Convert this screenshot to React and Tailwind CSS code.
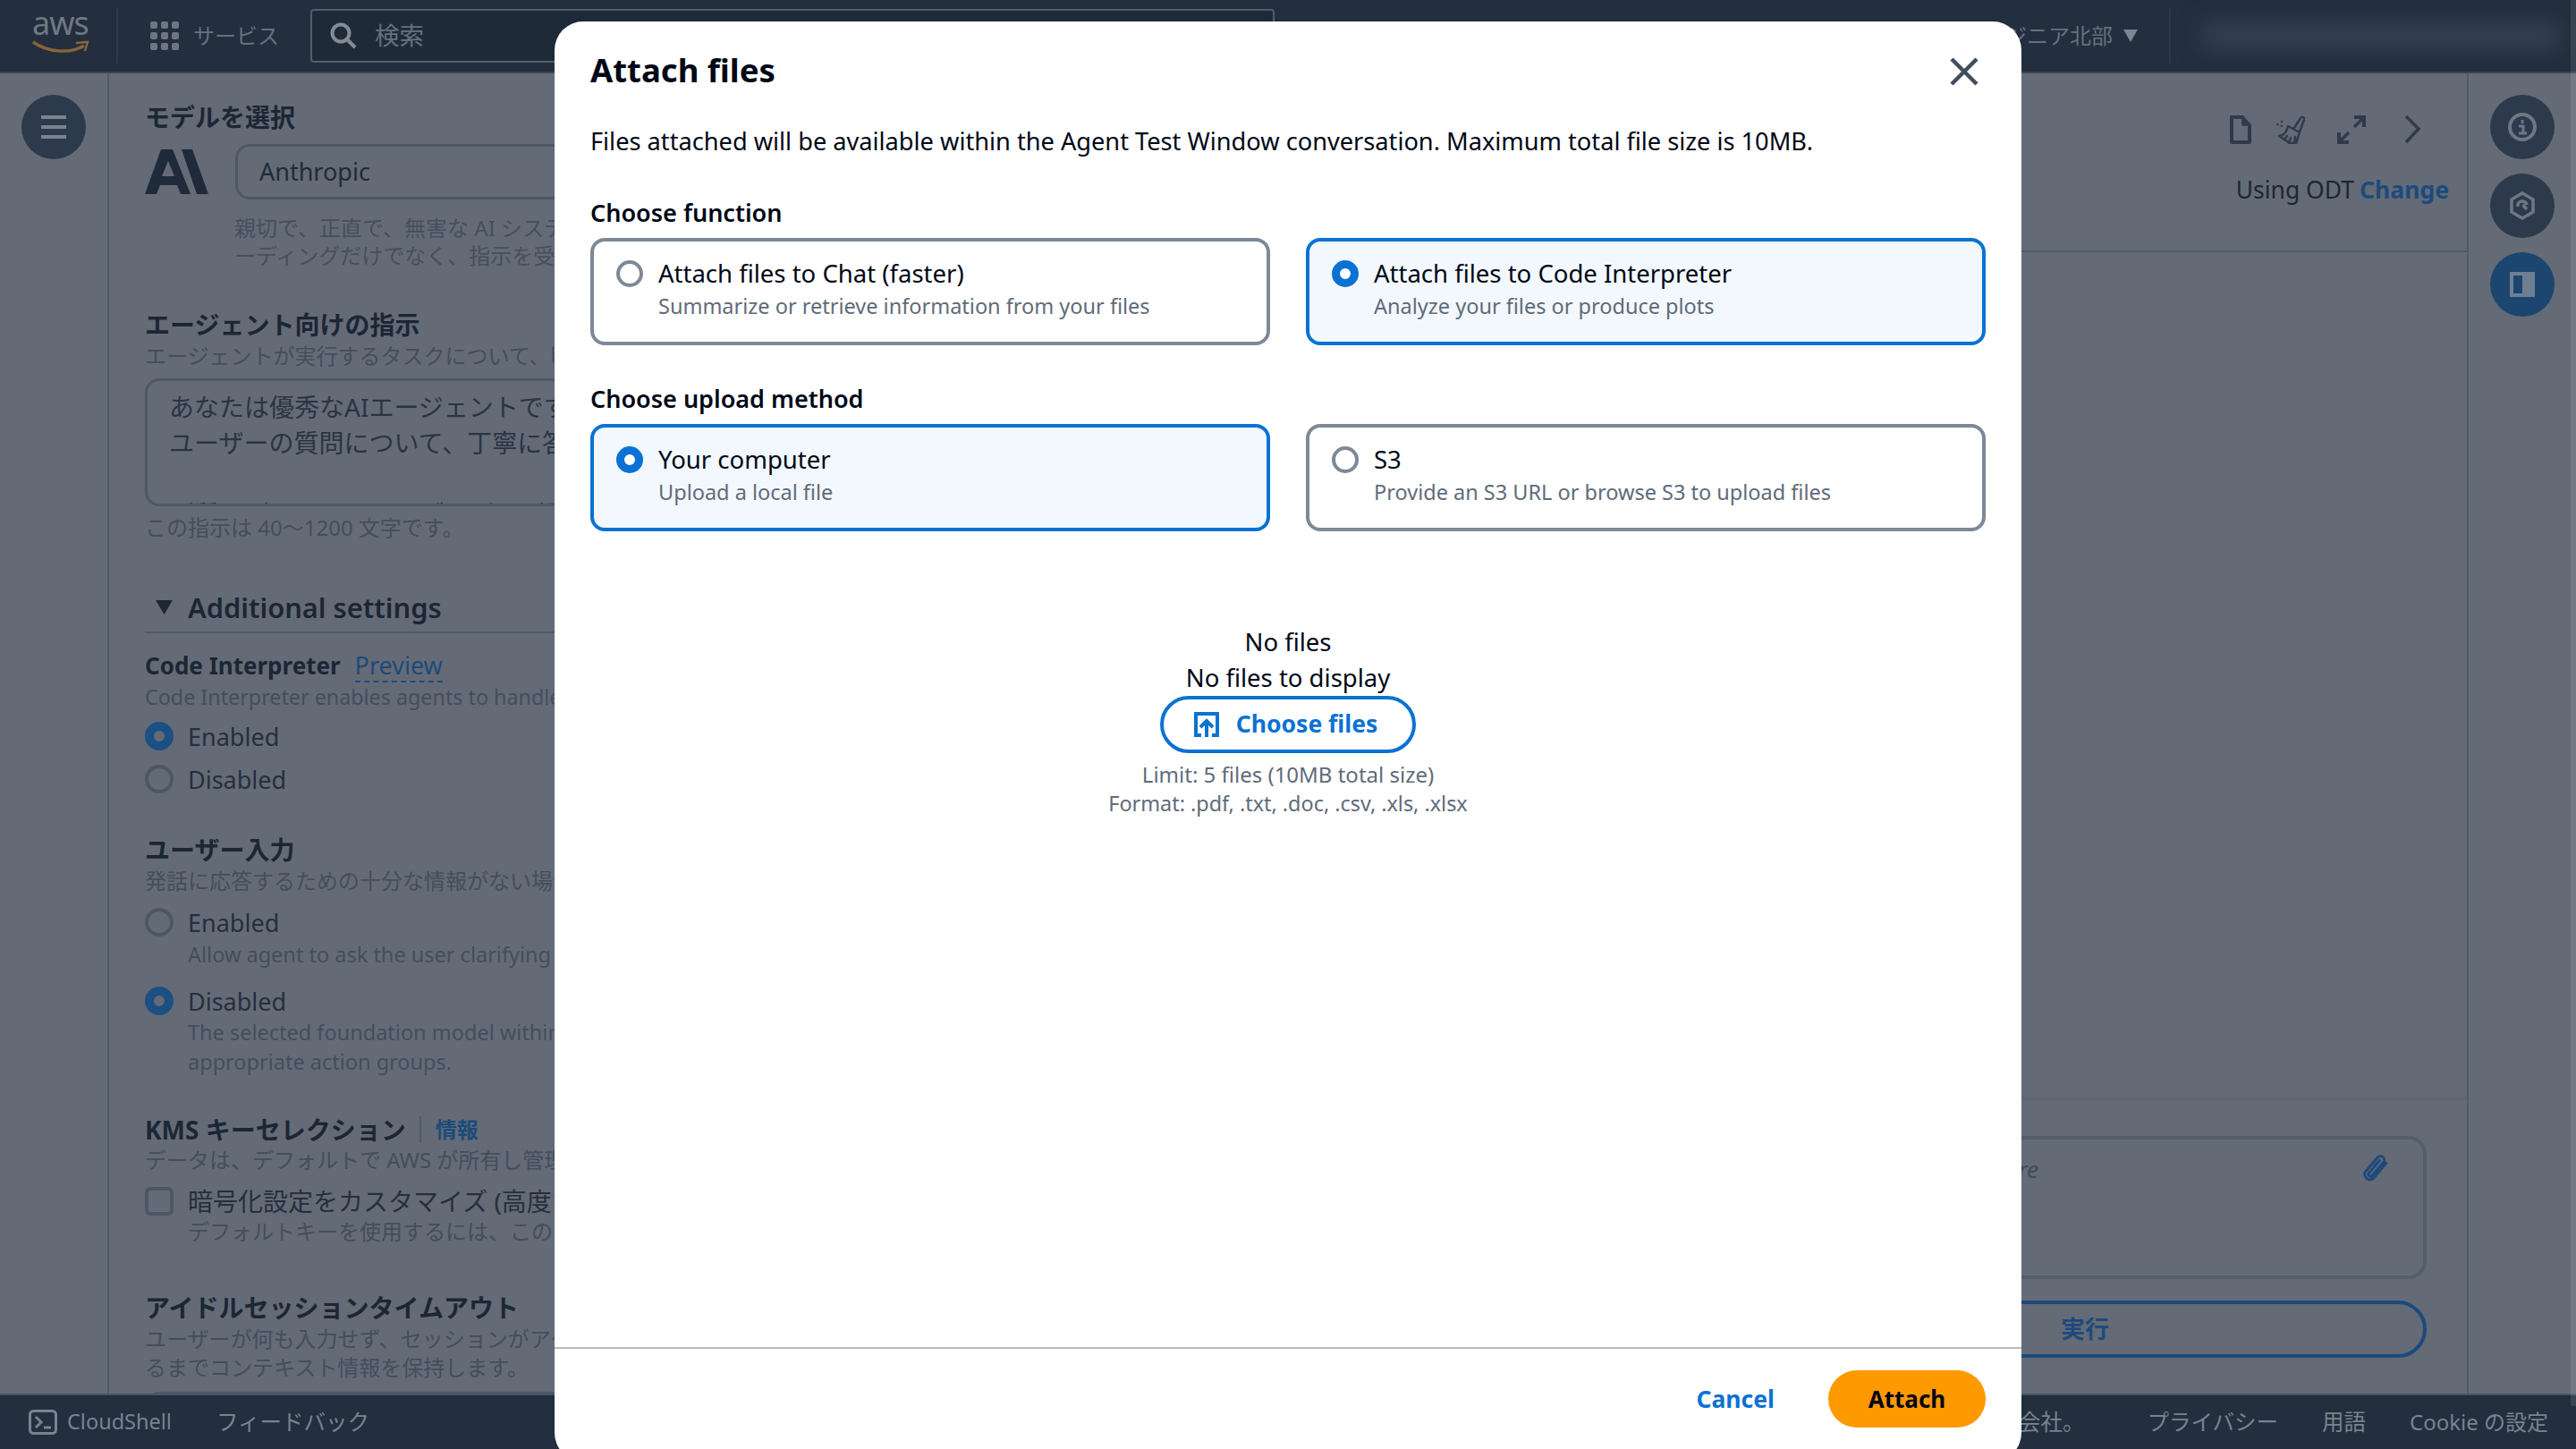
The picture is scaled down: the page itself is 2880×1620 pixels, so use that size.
const Label = ({ children, cls = "", size = "text-[28px]" }) => (
  <div className={`h-[34px] leading-[34px] font-bold text-[#1c2635] whitespace-nowrap ${size} ${cls}`}>{children}</div>
);
const Sub = ({ children, cls = "", size = "text-[24px]" }) => (
  <div className={`h-[32px] leading-[32px] text-[#434e5d] whitespace-nowrap ${size} ${cls}`}>{children}</div>
);
const DimRadio = ({ on }) =>
  on ? (
    <span className="w-[32px] h-[32px] rounded-full border-[10px] border-[#1c4f82] shrink-0" />
  ) : (
    <span className="w-[32px] h-[32px] rounded-full border-[4px] border-[#4b5666] shrink-0" />
  );
const DimOption = ({ on, children, cls = "" }) => (
  <div className={`flex items-center gap-[16px] h-[32px] text-[27px] text-[#252f3e] whitespace-nowrap ${cls}`}>
    <DimRadio on={on} />
    <span className="pt-[2px]">{children}</span>
  </div>
);
const Circle = ({ children, active }) => (
  <div className={`w-[72px] h-[72px] rounded-full flex items-center justify-center ${active ? "bg-[#1c456f]" : "bg-[#2c3a4c]"}`}>
    {children}
  </div>
);
const Card = ({ on, title, sub }) => (
  <div className={`w-[760px] h-[120px] border-[4px] rounded-[16px] pl-[25px] pt-[18px] flex items-start gap-[17px] ${on ? "border-[#0972d3] bg-[#f2f8fd]" : "border-[#7d8998] bg-white"}`}>
    {on ? (
      <span className="mt-[3px] w-[30px] h-[30px] rounded-full border-[9px] border-[#0972d3] bg-white shrink-0" />
    ) : (
      <span className="mt-[3px] w-[30px] h-[30px] rounded-full border-[4px] border-[#7d8998] bg-white shrink-0" />
    )}
    <div>
      <div className="h-[36px] leading-[36px] text-[27.5px] text-[#000716]">{title}</div>
      <div className="h-[36px] leading-[36px] text-[23.5px] text-[#5f6b7a]">{sub}</div>
    </div>
  </div>
);

export default function App() {
  return (
    <div className="relative w-[2880px] h-[1620px] overflow-hidden flex flex-col bg-[#646b76] [font-family:'Noto_Sans','Noto_Sans_CJK_JP',sans-serif]">
      {/* top nav */}
      <header className="h-[82px] shrink-0 bg-[#232e3e] border-b-2 border-[#3a4553] flex items-center relative">
        <div className="w-[132px] h-[62px] border-r-2 border-[#2e3a49] pl-[36px] flex flex-col shrink-0">
          <div className="h-[40px] leading-[34px] text-[36px] text-[#717884] tracking-[-1px]">aws</div>
          <svg width="64" height="16" viewBox="0 0 64 16" className="-mt-[4px]">
            <path d="M1 2 C16 13 42 16 58 6" fill="none" stroke="#846639" strokeWidth="3.500" />
            <path d="M49 3 L62 2 L59 12" fill="none" stroke="#846639" strokeWidth="2.500" />
          </svg>
        </div>
        <div className="ml-[36px] grid grid-cols-3 gap-[4px] w-[32px] shrink-0">
          {[0, 1, 2, 3, 4, 5, 6, 7, 8].map((i) => (
            <span key={i} className="w-[8px] h-[8px] rounded-[2px] bg-[#6f7682]" />
          ))}
        </div>
        <span className="ml-[16px] text-[24px] text-[#67717d] whitespace-nowrap">サービス</span>
        <div className="ml-[35px] w-[1078px] h-[60px] border-2 border-[#535e6c] rounded-[4px] bg-[#1f2a39] flex items-center pl-[20px] shrink-0">
          <svg width="30" height="30" viewBox="0 0 30 30" fill="none" stroke="#858b93" strokeWidth="4">
            <circle cx="12" cy="12" r="9.500" />
            <path d="M19 19 L28 28" />
          </svg>
          <span className="ml-[20px] text-[27.5px] text-[#67717d]">検索</span>
        </div>
        <div className="ml-auto flex items-center shrink-0 pr-[20px]">
          <span className="text-[24px] text-[#67717d] whitespace-nowrap">バージニア北部</span>
          <svg width="16" height="14" viewBox="0 0 16 14" className="ml-[12px]"><path d="M0 0 H16 L8 14 Z" fill="#7f858e" /></svg>
          <span className="ml-[35px] w-[2px] h-[62px] bg-[#2e3a49]" />
          <span className="ml-[36px] w-[397px] h-[30px] bg-[#354150] blur-[12px]" />
        </div>
      </header>

      {/* body */}
      <main className="flex-1 min-h-0 flex overflow-hidden">
        <div className="w-[122px] shrink-0 border-r-2 border-[#505b6a] pt-[24px] pl-[24px]">
          <div className="w-[72px] h-[72px] rounded-full bg-[#2c3a4c] flex flex-col items-center justify-center gap-[7px]">
            <span className="w-[28px] h-[4px] bg-[#7c838d]" />
            <span className="w-[28px] h-[4px] bg-[#7c838d]" />
            <span className="w-[28px] h-[4px] bg-[#7c838d]" />
          </div>
        </div>

        {/* builder column */}
        <section className="w-[900px] shrink-0 pl-[40px] overflow-hidden">
          <div className="mt-[31px] h-[36px] leading-[36px] text-[28px] font-bold text-[#1c2635]">モデルを選択</div>
          <div className="mt-[12px] flex items-center">
            <svg width="71" height="50" viewBox="0 0 71 50" className="shrink-0" fill="#1f2a3a">
              <path d="M18 0 H31 L51 50 H40 L36 40 H17 L13 50 H0 Z M19 30 H33 L26 13 Z" fillRule="evenodd" />
              <path d="M41 0 H53 L71 50 H58 Z" />
            </svg>
            <div className="ml-[30px] w-[760px] h-[62px] border-[3px] border-[#4d5867] rounded-[16px] flex items-center pl-[24px] text-[27px] text-[#1f2a3a]">Anthropic</div>
          </div>
          <div className="mt-[16px] ml-[100px] leading-[31px] text-[24px] text-[#454f5e] whitespace-nowrap">
            <div>親切で、正直で、無害な AI システムの構築を目指しています。</div>
            <div>ーディングだけでなく、指示を受けて作業します。</div>
          </div>
          <div className="mt-[44px] h-[36px] leading-[36px] text-[28px] font-bold text-[#1c2635]">エージェント向けの指示</div>
          <Sub cls="mt-[1px]">エージェントが実行するタスクについて、明確で具体的な指示を入力します。</Sub>
          <div className="mt-[9px] h-[143px] w-[860px] border-[3px] border-[#4d5867] rounded-[16px] pl-[24px] pt-[9px] text-[28px] leading-[40px] text-[#2a3443] overflow-hidden whitespace-nowrap">
            <div>あなたは優秀なAIエージェントです。</div>
            <div>ユーザーの質問について、丁寧に答えてください。</div>
            <div>&nbsp;</div>
            <div>ご質問がありましたらブログをご覧ください。</div>
          </div>
          <Sub cls="mt-[8px]">この指示は 40～1200 文字です。</Sub>

          <div className="mt-[53px] h-[49px] w-[860px] border-b-2 border-[#4f5a69] flex items-start">
            <svg width="19" height="16" viewBox="0 0 19 16" className="ml-[12px] mt-[12px] shrink-0"><path d="M0 0 H19 L9.500 16 Z" fill="#1c2635" /></svg>
            <span className="ml-[17px] h-[40px] leading-[40px] text-[30.800px] font-semibold text-[#1c2635]">Additional settings</span>
          </div>

          <Label size="text-[26px]" cls="mt-[19px] flex items-start">
            <span>Code Interpreter</span>
            <span className="ml-[16px] text-[27px] font-normal text-[#1c4a7c] border-b-2 border-dashed border-[#1c4a7c]">Preview</span>
          </Label>
          <Sub size="text-[23.300px]" cls="mt-[2px]">Code Interpreter enables agents to handle tasks that involve</Sub>
          <DimOption on cls="mt-[12px]">Enabled</DimOption>
          <DimOption cls="mt-[16px]">Disabled</DimOption>

          <Label cls="mt-[46px]">ユーザー入力</Label>
          <Sub cls="mt-[2px]">発話に応答するための十分な情報がない場合にユーザーに確認します。</Sub>
          <DimOption cls="mt-[14px]">Enabled</DimOption>
          <Sub size="text-[23.500px]" cls="mt-[4px] ml-[48px]">Allow agent to ask the user clarifying questions</Sub>
          <DimOption on cls="mt-[20px]">Disabled</DimOption>
          <Sub size="text-[23.500px]" cls="mt-[3px] ml-[48px]">The selected foundation model within the agent will use</Sub>
          <Sub size="text-[23.500px]" cls="mt-[1px] ml-[48px]">appropriate action groups.</Sub>

          <Label cls="mt-[43px] flex items-center">
            <span>KMS キーセレクション</span>
            <span className="ml-[15px] w-[2px] h-[30px] bg-[#4f5a69]" />
            <span className="ml-[16px] text-[24px] text-[#1c4a7c]">情報</span>
          </Label>
          <Sub cls="mt-[1px]">データは、デフォルトで AWS が所有し管理するキーで暗号化されます。</Sub>
          <div className="mt-[14px] flex items-center gap-[16px] h-[32px] text-[28px] text-[#252f3e] whitespace-nowrap">
            <span className="w-[32px] h-[32px] rounded-[6px] border-[4px] border-[#4b5666] shrink-0" />
            <span>暗号化設定をカスタマイズ (高度な設定)</span>
          </div>
          <Sub cls="mt-[2px] ml-[48px]">デフォルトキーを使用するには、このオプションをオフにします。</Sub>

          <Label cls="mt-[52px]">アイドルセッションタイムアウト</Label>
          <Sub cls="mt-[2px]">ユーザーが何も入力せず、セッションがアクティブでなくなるま</Sub>
          <Sub>るまでコンテキスト情報を保持します。</Sub>
          <div className="mt-[11px] h-[60px] w-[860px] border-[3px] border-[#4d5867] rounded-[16px]" />
        </section>

        {/* test panel */}
        <section className="flex-1 min-w-0 border-r-2 border-[#505b6a] flex flex-col">
          <div className="h-[200px] shrink-0 border-b-2 border-[#4f5a69] flex flex-col items-end pr-[20px]">
            <div className="mt-[46px] h-[34px] flex items-center text-[#2f3b4c] pr-[31px]">
              <svg width="24" height="32" viewBox="0 0 24 32" fill="none" stroke="currentColor" strokeWidth="4" strokeLinejoin="round">
                <path d="M2 2 H14 L22 11 V30 H2 Z" />
                <path d="M14 2 V11 H22 Z" fill="currentColor" strokeWidth="1.500" />
              </svg>
              <svg width="32" height="32" viewBox="0 0 32 32" fill="none" stroke="currentColor" strokeWidth="2.500" className="ml-[28px]" strokeLinejoin="round" strokeLinecap="round">
                <path d="M20 14 L27 3 a2.200 2.200 0 0 1 4 2 L26 18" />
                <path d="M13 12 L26 19 L22 31 H15 L3 23 C8 23 12 18 13 12 Z" />
                <path d="M14 31 L16 25 M20 31 L21 24 M9 27 L12 23" />
                <circle cx="1.500" cy="10" r="1.300" fill="currentColor" stroke="none" />
                <circle cx="6" cy="7" r="1.300" fill="currentColor" stroke="none" />
                <circle cx="6" cy="12" r="1.300" fill="currentColor" stroke="none" />
              </svg>
              <svg width="32" height="32" viewBox="0 0 32 32" fill="none" stroke="currentColor" strokeWidth="3.500" className="ml-[36px]">
                <path d="M19 2 H30 V13" strokeWidth="4" /><path d="M30 2 L19 13" />
                <path d="M2 19 V30 H13" strokeWidth="4" /><path d="M2 30 L13 19" />
              </svg>
              <svg width="19" height="32" viewBox="0 0 19 32" fill="none" stroke="currentColor" strokeWidth="3.500" className="ml-[43px]">
                <path d="M2 1 L16 15 L2 30" />
              </svg>
            </div>
            <div className="mt-[32px] h-[36px] leading-[36px] text-[26.500px] text-[#1c2635] whitespace-nowrap">
              Using ODT<span className="ml-[6px] font-bold text-[#1c4a7c]">Change</span>
            </div>
          </div>
          <div className="flex-1" />
          <div className="h-[332px] shrink-0 border-t-4 border-[#5e6672] pt-[40px] pr-[45px]">
            <div className="h-[160px] border-[4px] border-[#545e6c] rounded-[20px] flex justify-end items-start pr-[36px]">
              <span className="mt-[15px] h-[36px] leading-[36px] text-[26px] italic text-[#3f4a5a] whitespace-nowrap">Enter your message here</span>
              <svg width="36" height="36" viewBox="0 0 24 24" fill="none" stroke="#1c4a7c" strokeWidth="2" className="mt-[15px] ml-[358px]">
                <path d="M21 7 L11 19 a4 4 0 0 1 -6 -5 L14 3.500 a2.800 2.800 0 0 1 4.500 3.500 L10 17 a1.500 1.500 0 0 1 -2.300 -2 L16 5" />
              </svg>
            </div>
            <div className="mt-[24px] h-[64px] border-[4px] border-[#1d4a7c] rounded-full flex items-center justify-end pr-[351px] text-[27px] font-bold text-[#1c4a7c]">実行</div>
          </div>
        </section>

        <aside className="w-[120px] shrink-0 pt-[24px] pl-[24px] flex flex-col gap-[16px]">
          <Circle>
            <svg width="32" height="32" viewBox="0 0 32 32" fill="none" stroke="#6f7783" strokeWidth="4">
              <circle cx="16" cy="16" r="14" />
              <path d="M16 8 V12 M12 15 H17 V23 M12 23 H21" strokeWidth="3" />
            </svg>
          </Circle>
          <Circle>
            <svg width="28" height="32" viewBox="0 0 28 32" fill="none" stroke="#6f7783" strokeWidth="3.500">
              <path d="M14 2 L26 9 V23 L14 30 L2 23 V9 Z" />
              <path d="M19 20 L14.500 15 M9 17 a5 5 0 0 1 10 -2" />
            </svg>
          </Circle>
          <Circle active>
            <svg width="28" height="28" viewBox="0 0 28 28">
              <path d="M0 0 H28 V28 H0 Z M4 4 V24 H14 V4 Z" fill="#6f7f93" fillRule="evenodd" />
            </svg>
          </Circle>
        </aside>
      </main>

      {/* console footer */}
      <footer className="h-[62px] shrink-0 bg-[#232e3e] border-t-2 border-[#4a5460] flex items-center text-[24.500px] text-[#7a838f] whitespace-nowrap">
        <svg width="32" height="28" viewBox="0 0 32 28" fill="none" stroke="#7a838f" strokeWidth="3" className="ml-[32px] shrink-0">
          <rect x="1.500" y="1.500" width="29" height="25" rx="4" />
          <path d="M8 8 L14 14 L8 20" /><path d="M17 20 H25" />
        </svg>
        <span className="ml-[11px] text-[23.500px]">CloudShell</span>
        <span className="ml-[50px]">フィードバック</span>
        <span className="ml-auto">© 2024, Amazon Web Services, Inc. またはその関連会社。</span>
        <span className="ml-[70px]">プライバシー</span>
        <span className="ml-[49px]">用語</span>
        <span className="ml-[49px] mr-[31px] text-[24px]">Cookie の設定</span>
      </footer>

      {/* scrollbar track */}
      <div className="absolute top-0 right-0 w-[6px] h-[1572px] bg-white/10" />

      {/* modal */}
      <div className="absolute left-[620px] top-[24px] w-[1640px] h-[1610px] bg-white rounded-[32px] flex flex-col text-[#000716]">
        <div className="pt-[29px] px-[40px] flex justify-between">
          <h1 className="h-[50px] leading-[50px] text-[36.500px] font-bold">Attach files</h1>
          <svg width="32" height="32" viewBox="0 0 32 32" fill="none" stroke="#414d5c" strokeWidth="4.500" className="mt-[11px] mr-[8px]">
            <path d="M2 2 L30 30 M30 2 L2 30" />
          </svg>
        </div>
        <p className="mt-[36px] px-[40px] h-[38px] leading-[38px] text-[27.200px]">Files attached will be available within the Agent Test Window conversation. Maximum total file size is 10MB.</p>
        <div className="mt-[43px] px-[40px] h-[36px] leading-[36px] text-[27px] font-semibold">Choose function</div>
        <div className="mt-[10px] px-[40px] flex justify-between">
          <Card title="Attach files to Chat (faster)" sub="Summarize or retrieve information from your files" />
          <Card on title="Attach files to Code Interpreter" sub="Analyze your files or produce plots" />
        </div>
        <div className="mt-[42px] px-[40px] h-[36px] leading-[36px] text-[27px] font-semibold">Choose upload method</div>
        <div className="mt-[10px] px-[40px] flex justify-between">
          <Card on title="Your computer" sub="Upload a local file" />
          <Card title="S3" sub="Provide an S3 URL or browse S3 to upload files" />
        </div>
        <div className="mt-[104px] flex flex-col items-center">
          <div className="h-[40px] leading-[40px] text-[27.500px]">No files</div>
          <div className="h-[40px] leading-[40px] text-[27.500px]">No files to display</div>
          <button className="w-[286px] h-[64px] border-[4px] border-[#0972d3] rounded-full pr-[5px] flex items-center justify-center gap-[19px] text-[26.500px] font-bold text-[#0972d3]">
            <svg width="28" height="28" viewBox="0 0 28 28" fill="none" stroke="#0972d3" strokeWidth="4">
              <path d="M8 26 H2 V2 H26 V26 H20" />
              <path d="M14 28 V11" />
              <path d="M7 17 L14 10 L21 17" />
            </svg>
            Choose files
          </button>
          <div className="mt-[8px] h-[32px] leading-[32px] text-[24px] text-[#5f6b7a]">Limit: 5 files (10MB total size)</div>
          <div className="h-[32px] leading-[32px] text-[23.400px] text-[#5f6b7a]">Format: .pdf, .txt, .doc, .csv, .xls, .xlsx</div>
        </div>
        <div className="mt-auto h-[128px] border-t-2 border-[#b4bcc8] pt-[24px] pr-[40px] flex justify-end items-start">
          <span className="h-[64px] leading-[64px] text-[26.500px] font-bold text-[#0972d3]">Cancel</span>
          <button className="ml-[60px] w-[176px] h-[64px] rounded-full bg-[#ff9900] text-[26px] font-bold text-[#000716]">Attach</button>
        </div>
      </div>
    </div>
  );
}
